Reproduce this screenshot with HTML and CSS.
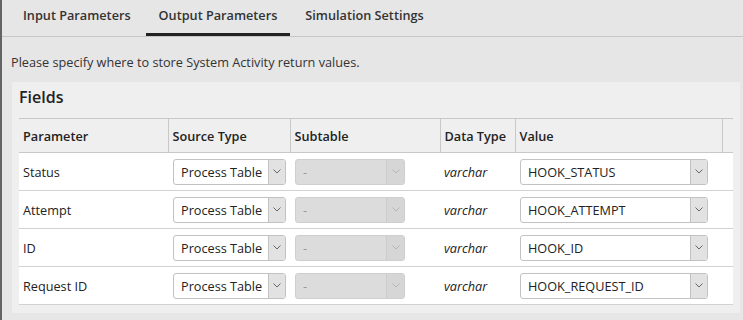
FILE: index.html
```html
<!DOCTYPE html>
<html>
<head>
  <meta charset="UTF-8">
  <link rel="stylesheet" href="styles.css">
  <title>Output Parameters</title>
</head>
<body>
  <div class="tabs">
    <div class="tab">Input Parameters</div>
    <div class="tab tab-active">Output Parameters</div>
    <div class="tab">Simulation Settings</div>
  </div>

  <p class="hint">Please specify where to store System Activity return values.</p>

  <div class="panel">
    <h2 class="panel-title">Fields</h2>
    <table class="fields">
      <colgroup>
        <col class="c-param">
        <col class="c-source">
        <col class="c-sub">
        <col class="c-type">
        <col class="c-value">
        <col class="c-gutter">
      </colgroup>
      <thead>
        <tr>
          <th>Parameter</th>
          <th>Source Type</th>
          <th>Subtable</th>
          <th>Data Type</th>
          <th>Value</th>
          <th></th>
        </tr>
      </thead>
      <tbody>
        <tr>
          <td>Status</td>
          <td><div class="pick pick-source"><span class="pick-text">Process Table</span><span class="pick-arrow"><svg width="8" height="5" viewBox="0 0 8 5"><path d="M0.5 0.5 L4 4 L7.5 0.5" fill="none" stroke="#666" stroke-width="1"/></svg></span></div></td>
          <td><div class="pick pick-sub"><span class="pick-text">-</span><span class="pick-arrow"><svg width="8" height="5" viewBox="0 0 8 5"><path d="M0.5 0.5 L4 4 L7.5 0.5" fill="none" stroke="#b5b5b5" stroke-width="1"/></svg></span></div></td>
          <td class="type">varchar</td>
          <td><div class="pick pick-value"><span class="pick-text">HOOK_STATUS</span><span class="pick-arrow"><svg width="8" height="5" viewBox="0 0 8 5"><path d="M0.5 0.5 L4 4 L7.5 0.5" fill="none" stroke="#666" stroke-width="1"/></svg></span></div></td>
          <td></td>
        </tr>
        <tr>
          <td>Attempt</td>
          <td><div class="pick pick-source"><span class="pick-text">Process Table</span><span class="pick-arrow"><svg width="8" height="5" viewBox="0 0 8 5"><path d="M0.5 0.5 L4 4 L7.5 0.5" fill="none" stroke="#666" stroke-width="1"/></svg></span></div></td>
          <td><div class="pick pick-sub"><span class="pick-text">-</span><span class="pick-arrow"><svg width="8" height="5" viewBox="0 0 8 5"><path d="M0.5 0.5 L4 4 L7.5 0.5" fill="none" stroke="#b5b5b5" stroke-width="1"/></svg></span></div></td>
          <td class="type">varchar</td>
          <td><div class="pick pick-value"><span class="pick-text">HOOK_ATTEMPT</span><span class="pick-arrow"><svg width="8" height="5" viewBox="0 0 8 5"><path d="M0.5 0.5 L4 4 L7.5 0.5" fill="none" stroke="#666" stroke-width="1"/></svg></span></div></td>
          <td></td>
        </tr>
        <tr>
          <td>ID</td>
          <td><div class="pick pick-source"><span class="pick-text">Process Table</span><span class="pick-arrow"><svg width="8" height="5" viewBox="0 0 8 5"><path d="M0.5 0.5 L4 4 L7.5 0.5" fill="none" stroke="#666" stroke-width="1"/></svg></span></div></td>
          <td><div class="pick pick-sub"><span class="pick-text">-</span><span class="pick-arrow"><svg width="8" height="5" viewBox="0 0 8 5"><path d="M0.5 0.5 L4 4 L7.5 0.5" fill="none" stroke="#b5b5b5" stroke-width="1"/></svg></span></div></td>
          <td class="type">varchar</td>
          <td><div class="pick pick-value"><span class="pick-text">HOOK_ID</span><span class="pick-arrow"><svg width="8" height="5" viewBox="0 0 8 5"><path d="M0.5 0.5 L4 4 L7.5 0.5" fill="none" stroke="#666" stroke-width="1"/></svg></span></div></td>
          <td></td>
        </tr>
        <tr>
          <td>Request ID</td>
          <td><div class="pick pick-source"><span class="pick-text">Process Table</span><span class="pick-arrow"><svg width="8" height="5" viewBox="0 0 8 5"><path d="M0.5 0.5 L4 4 L7.5 0.5" fill="none" stroke="#666" stroke-width="1"/></svg></span></div></td>
          <td><div class="pick pick-sub"><span class="pick-text">-</span><span class="pick-arrow"><svg width="8" height="5" viewBox="0 0 8 5"><path d="M0.5 0.5 L4 4 L7.5 0.5" fill="none" stroke="#b5b5b5" stroke-width="1"/></svg></span></div></td>
          <td class="type">varchar</td>
          <td><div class="pick pick-value"><span class="pick-text">HOOK_REQUEST_ID</span><span class="pick-arrow"><svg width="8" height="5" viewBox="0 0 8 5"><path d="M0.5 0.5 L4 4 L7.5 0.5" fill="none" stroke="#666" stroke-width="1"/></svg></span></div></td>
          <td></td>
        </tr>
      </tbody>
    </table>
  </div>
</body>
</html>
```

FILE: styles.css
```css
  body {
    margin: 0;
    height: 320px;
    background-color: #e6e6e6;
    border-left: 2px solid #646464;
    font-family: "Open Sans", sans-serif;
    font-size: 12.7px;
    color: #222;
    overflow: hidden;
  }

  /* tab strip */
  .tabs {
    display: flex;
    gap: 2px;
    padding-left: 8px;
    border-bottom: 1px solid #c6c6c6;
  }

  .tab {
    padding: 6px 13px 0 13px;
    height: 27px;
    font-weight: 600;
    color: #333;
    border-bottom: 3px solid transparent;
  }

  .tab-active {
    border-bottom-color: #222;
  }

  .hint {
    margin: 16px 0 0 9px;
    line-height: 18px;
    color: #333;
  }

  /* fields panel */
  .panel {
    margin: 11px 3px 0 10px;
    padding: 0 7px 8px 7px;
    background-color: #efefef;
    border-radius: 2px;
  }

  .panel-title {
    margin: 0;
    padding: 2px 0 0 0;
    height: 34px;
    line-height: 27px;
    font-size: 16px;
    font-weight: 600;
    color: #222;
  }

  table.fields {
    border-collapse: collapse;
    table-layout: fixed;
    width: 714px;
  }

  .c-param { width: 149px; }
  .c-source { width: 122px; }
  .c-sub { width: 150px; }
  .c-type { width: 75px; }
  .c-value { width: 207px; }
  .c-gutter { width: 11px; }

  th {
    height: 33px;
    padding: 0 4px;
    text-align: left;
    font-weight: 600;
    color: #222;
    border-top: 1px solid #c8c8c8;
    border-bottom: 1px solid #c8c8c8;
    border-left: 1px solid #c8c8c8;
  }

  th:first-child {
    border-left: none;
  }

  td {
    height: 37px;
    padding: 0 4px;
    background-color: #fff;
    border-bottom: 1px solid #d2d2d2;
    color: #222;
  }

  td.type {
    font-style: italic;
  }

  /* select boxes */
  .pick {
    display: flex;
    height: 24px;
    margin-left: 1px;
    border: 1px solid #c2c2c2;
    border-radius: 3px;
    background-color: #fff;
    overflow: hidden;
  }

  .pick-text {
    flex: 1;
    padding-left: 7px;
    line-height: 24px;
    white-space: nowrap;
  }

  .pick-arrow {
    display: flex;
    align-items: center;
    justify-content: center;
    width: 16px;
    border-left: 1px solid #c2c2c2;
    background-color: #e2e2e2;
  }

  .pick-source { width: 111px; }
  .pick-value { width: 186px; }

  .pick-sub {
    width: 108px;
    background-color: #dcdcdc;
    border-color: #cfcfcf;
  }

  .pick-sub .pick-text {
    color: #999;
  }

  .pick-sub .pick-arrow {
    width: 17px;
    background-color: #d6d6d6;
    border-left-color: #cccccc;
  }
```
